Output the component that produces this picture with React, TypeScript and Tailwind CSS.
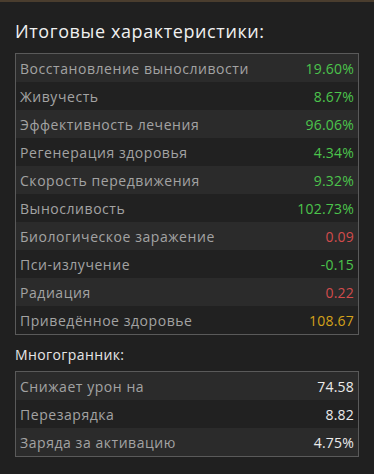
const stats = [
  { label: "Восстановление выносливости", value: "19.60%", color: "text-[#4cc44c]" },
  { label: "Живучесть", value: "8.67%", color: "text-[#4cc44c]" },
  { label: "Эффективность лечения", value: "96.06%", color: "text-[#4cc44c]" },
  { label: "Регенерация здоровья", value: "4.34%", color: "text-[#4cc44c]" },
  { label: "Скорость передвижения", value: "9.32%", color: "text-[#4cc44c]" },
  { label: "Выносливость", value: "102.73%", color: "text-[#4cc44c]" },
  { label: "Биологическое заражение", value: "0.09", color: "text-[#d24b4b]" },
  { label: "Пси-излучение", value: "-0.15", color: "text-[#4cc44c]" },
  { label: "Радиация", value: "0.22", color: "text-[#d24b4b]" },
  { label: "Приведённое здоровье", value: "108.67", color: "text-[#d4a21a]" },
]

const poly = [
  { label: "Снижает урон на", value: "74.58" },
  { label: "Перезарядка", value: "8.82" },
  { label: "Заряда за активацию", value: "4.75%" },
]

function StatTable({ rows }: { rows: { label: string; value: string; color?: string }[] }) {
  return (
    <div className="border border-[#5a5a5a]">
      {rows.map((r, i) => (
        <div
          key={r.label}
          className={`flex h-[28px] items-center justify-between px-1 text-[14px] tracking-[0.55px] ${i % 2 === 0 ? "bg-[#2b2b2b]" : "bg-[#212121]"}`}
        >
          <span className="text-[#a3a3a3]">{r.label}</span>
          <span className={`${r.color ?? "text-[#ececec]"} tracking-[0.2px]`}>{r.value}</span>
        </div>
      ))}
    </div>
  )
}

export default function App() {
  return (
    <div className="h-[474px] w-[374px] bg-[#202020]" style={{ fontFamily: '"Open Sans", sans-serif' }}>
      <div className="h-[2px] bg-[#4a3d2e]" />
      <div className="px-[15px] pt-[17px]">
        <h2 className="mb-[10px] text-[18px] leading-[24px] tracking-[0.6px] text-[#f0f0f0]">Итоговые характеристики:</h2>
        <StatTable rows={stats} />
        <h3 className="mt-[10px] mb-[6px] text-[14px] leading-[20px] tracking-[0.4px] font-medium text-[#e6e6e6]">Многогранник:</h3>
        <StatTable rows={poly} />
      </div>
    </div>
  )
}
